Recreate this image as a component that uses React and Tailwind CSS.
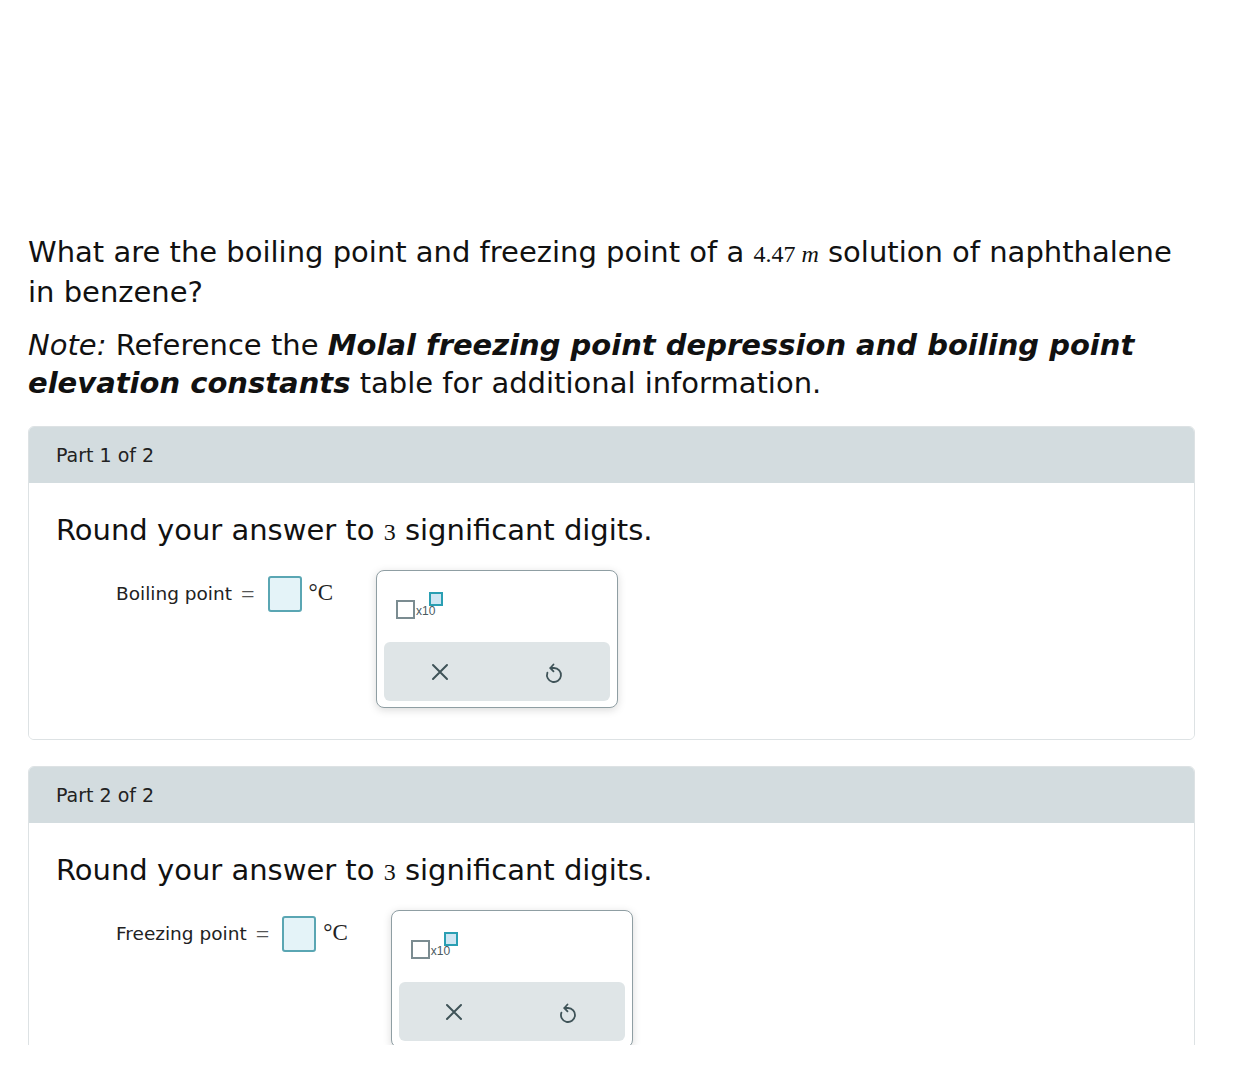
import React from "react";

function X10Icon() {
  return (
    <div className="relative w-[48px] h-[28px]">
      <div className="absolute left-0 top-[9px] w-[19px] h-[19px] border-2 border-[#7b8c91]" />
      <span className="absolute left-[20px] top-[14px] text-[12px] leading-none text-[#4a5a5f]" style={{ fontFamily: '"Liberation Sans", Arial, sans-serif' }}>x10</span>
      <div className="absolute left-[33px] top-[1px] w-[14px] h-[14px] border-2 border-[#2a9fb3] bg-[#cfe6f3]" />
    </div>
  );
}

function Keypad() {
  return (
    <div className="w-[242px] h-[138px] rounded-[8px] border border-[#8f9ea3] bg-white shadow-[0_2px_8px_rgba(0,0,0,0.15)] flex flex-col">
      <div className="pl-[19px] pt-[20px] h-[71px]">
        <X10Icon />
      </div>
      <div className="mx-[7px] mb-[6px] flex-1 rounded-[6px] bg-[#dfe5e7] flex items-center">
        <div className="w-1/2 flex justify-center pr-[2px]">
          <svg width="20" height="20" viewBox="0 0 20 20" fill="none" stroke="#3f5358" strokeWidth="2" strokeLinecap="round">
            <path d="M3 3L17 17M17 3L3 17" />
          </svg>
        </div>
        <div className="w-1/2 flex justify-center">
          <svg width="20" height="24" viewBox="0 0 20 24" fill="none" stroke="#3f5358" strokeWidth="1.8" strokeLinecap="round" strokeLinejoin="round">
            <path d="M3.4 12.6A7 7 0 1 0 10 8L6.5 8" />
            <path d="M9.5 4.5L6.3 8L9.5 11.3" />
          </svg>
        </div>
      </div>
    </div>
  );
}

function Part({ n, label }) {
  return (
    <div className="ml-[28px] w-[1167px] rounded-[6px] border border-[#dde2e4] overflow-hidden">
      <div className="h-[56px] bg-[#d3dcdf] flex items-center pl-[27px] text-[19px] text-[#222]">
        Part {n} of 2
      </div>
      <div className="bg-white pl-[27px] pt-[28px] pb-[31px]">
        <div className="text-[29px] leading-[38px] text-[#111]">
          Round your answer to <span className="text-[24px]" style={{ fontFamily: '"Liberation Serif", "Times New Roman", serif' }}>3</span> significant digits.
        </div>
        <div className="mt-[19px] ml-[60px] flex items-start">
          <div className="flex items-center h-[36px] mt-[6px] text-[18.5px] text-[#222]">
            <span>{label}</span>
            <span className="ml-[9px] text-[24px] leading-none text-[#555]" style={{ fontFamily: '"Liberation Serif", serif' }}>=</span>
            <div className="ml-[13px] w-[34px] h-[36px] rounded-[3px] border-2 border-[#5aa6b3] bg-[#e4f3f8]" />
            <span className="ml-[7px] -mt-[2px] text-[23px] text-[#222]" style={{ fontFamily: '"Liberation Serif", "Times New Roman", serif' }}>°C</span>
          </div>
          <div className="ml-[43px]">
            <Keypad />
          </div>
        </div>
      </div>
    </div>
  );
}

export default function App() {
  return (
    <div className="h-[1045px] overflow-hidden bg-white" style={{ fontFamily: '"DejaVu Sans", Verdana, sans-serif' }}>
      <div className="pt-[233px]">
        <p className="ml-[28px] w-[1167px] text-[29px] leading-[38px] text-[#111]">
          What are the boiling point and freezing point of a{" "}
          <span className="text-[24px]" style={{ fontFamily: '"Liberation Serif", "Times New Roman", serif' }}>
            4.47 <i>m</i>
          </span>{" "}
          solution of naphthalene in benzene?
        </p>
        <p className="ml-[28px] w-[1167px] mt-[15px] text-[29px] leading-[38px] text-[#111]">
          <i>Note:</i> Reference the <b><i>Molal freezing point depression and boiling point elevation constants</i></b> table for additional information.
        </p>
        <div className="mt-[24px]">
          <Part n={1} label="Boiling point" />
        </div>
        <div className="mt-[26px]">
          <Part n={2} label="Freezing point" />
        </div>
      </div>
    </div>
  );
}
